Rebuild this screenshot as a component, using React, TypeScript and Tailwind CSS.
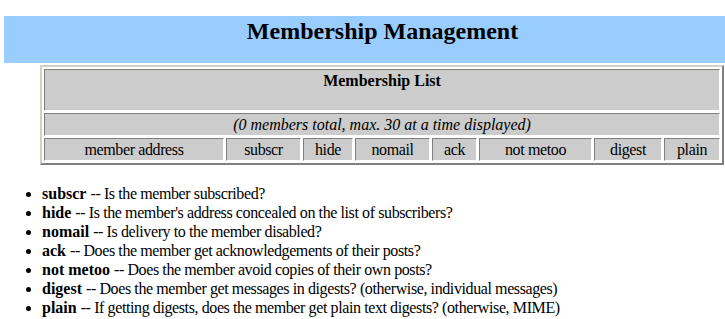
import React from "react";

const cell =
  "bg-[#cccccc] border border-t-[#808080] border-l-[#808080] border-b-white border-r-white p-0 text-center align-middle";

const cols = [
  { w: "w-[180px]", label: "member address" },
  { w: "w-[75px]", label: "subscr" },
  { w: "w-[50px]", label: "hide" },
  { w: "w-[75px]", label: "nomail" },
  { w: "w-[45px]", label: "ack" },
  { w: "w-[113px]", label: "not metoo" },
  { w: "w-[68px]", label: "digest" },
  { w: "w-[56px]", label: "plain" },
];

const items: [string, string][] = [
  ["subscr", "Is the member subscribed?"],
  ["hide", "Is the member's address concealed on the list of subscribers?"],
  ["nomail", "Is delivery to the member disabled?"],
  ["ack", "Does the member get acknowledgements of their posts?"],
  ["not metoo", "Does the member avoid copies of their own posts?"],
  ["digest", "Does the member get messages in digests? (otherwise, individual messages)"],
  ["plain", "If getting digests, does the member get plain text digests? (otherwise, MIME)"],
];

export default function App() {
  return (
    <div className="w-[725px] h-[319px] overflow-hidden bg-white text-black font-['Liberation_Serif',serif] text-[16px]">
      <div className="ml-[4px] mt-[16px] w-[757px] h-[47px] bg-[#99ccff]">
        <h2 className="text-center text-[24px] font-bold leading-[28px] pt-[1px]">
          Membership Management
        </h2>
      </div>
      <table className="ml-[40px] mt-[2px] w-[684px] table-fixed border-separate border-spacing-[2px] border-2 border-t-[#d4d0c8] border-l-[#d4d0c8] border-b-[#808080] border-r-[#808080] bg-white">
        <colgroup>
          {cols.map((c) => (
            <col key={c.label} className={c.w} />
          ))}
        </colgroup>
        <tbody>
          <tr>
            <td colSpan={8} className={`${cell} h-[42px] align-top pt-[2px] font-bold leading-[18px]`}>
              Membership List
            </td>
          </tr>
          <tr>
            <td colSpan={8} className={`${cell} h-[23px] italic leading-[18px]`}>
              (0 members total, max. 30 at a time displayed)
            </td>
          </tr>
          <tr>
            {cols.map((c) => (
              <td key={c.label} className={`${cell} h-[23px] leading-[18px] tracking-[-0.38px]`}>
                {c.label}
              </td>
            ))}
          </tr>
        </tbody>
      </table>
      <ul className="mt-[19px] pl-[42px] list-disc leading-[19px]">
        {items.map(([k, v]) => (
          <li key={k} className="whitespace-nowrap">
            <b>{k}</b> <span className="tracking-[-0.4px]">-- {v}</span>
          </li>
        ))}
      </ul>
    </div>
  );
}
